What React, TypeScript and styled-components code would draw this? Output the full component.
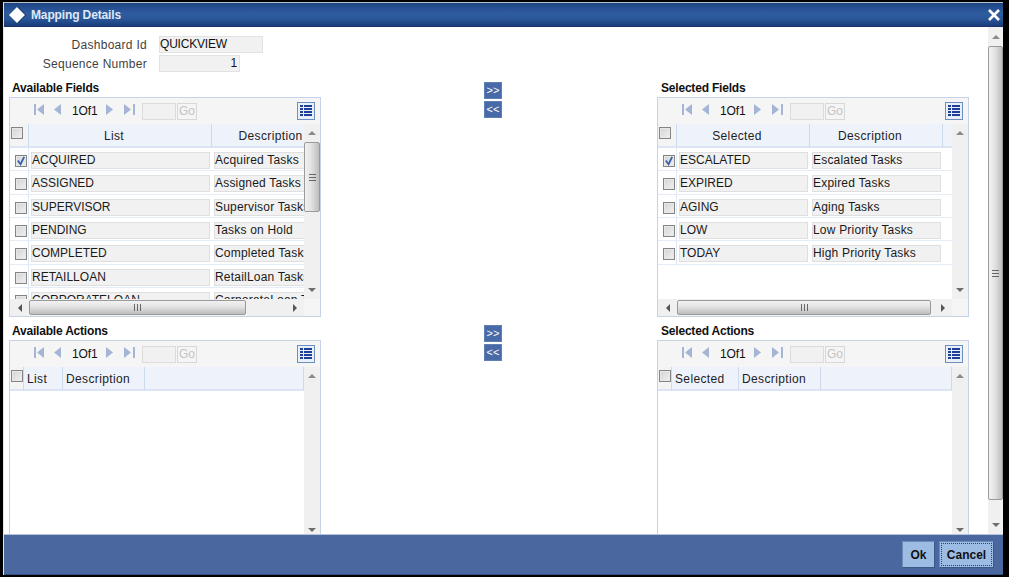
import React from "react";
import styled, { createGlobalStyle } from "styled-components";

const GlobalStyle = createGlobalStyle`
  html, body {
    margin: 0;
    padding: 0;
    background: #000;
    font-family: "Liberation Sans", Arial, sans-serif;
    font-size: 12px;
    overflow: hidden;
  }
`;

const Window = styled.div`
  width: 1009px;
  height: 577px;
  box-sizing: border-box;
  padding: 2px 6px 2px 3px;
  background: #000;
  display: flex;
  flex-direction: column;
`;

const Frame = styled.div`
  flex: 1;
  min-height: 0;
  display: flex;
  flex-direction: column;
  background: #fff;
  border-top: 1px solid #b9bec6;
  border-left: 1px solid #dfe6f2;
`;

const TitleBar = styled.div`
  height: 24px;
  box-sizing: border-box;
  flex: none;
  display: flex;
  align-items: center;
  padding: 0 2px 0 5px;
  gap: 4px;
  background: linear-gradient(#1d4484, #2e5c9f 45%, #2a5698 70%, #193c7a);
  border-bottom: 1px solid #17356d;
  color: #dfe8f6;
  font-weight: bold;
  letter-spacing: -0.13px;
`;

const TitleText = styled.span`
  flex: 1;
`;

const Middle = styled.div`
  flex: 1;
  min-height: 0;
  display: flex;
`;

const Content = styled.div`
  flex: 1;
  min-width: 0;
  overflow: hidden;
  padding: 8px 0 0 5px;
`;

const FieldRow = styled.div`
  display: flex;
  align-items: center;
  height: 19px;
  gap: 12px;
`;

const FieldLabel = styled.span`
  width: 138px;
  text-align: right;
  color: #3f3f3f;
  letter-spacing: 0.28px;
`;

const FieldValue = styled.div<{ $w: number; $right?: boolean }>`
  width: ${(p) => p.$w}px;
  height: 17px;
  box-sizing: border-box;
  background: #f1f1f1;
  border: 1px solid #e2e2e2;
  padding: 0 2px 0 0;
  line-height: 14px;
  color: #111;
  letter-spacing: -0.2px;
  text-align: ${(p) => (p.$right ? "right" : "left")};
`;

const Sections = styled.div`
  margin-top: 7px;
  display: grid;
  grid-template-columns: 312px 336px 312px;
  row-gap: 6px;
`;

const Group = styled.div``;

const GroupTitle = styled.div<{ $pad: number }>`
  height: 17px;
  line-height: 16px;
  padding-left: ${(p) => p.$pad}px;
  font-weight: bold;
  color: #111;
  letter-spacing: -0.2px;
`;

const MoveColumn = styled.div`
  padding: 2px 0 0 163px;
  display: flex;
  flex-direction: column;
  gap: 2px;
`;

const MoveButton = styled.div`
  width: 18px;
  height: 17px;
  box-sizing: border-box;
  background: #486aa6;
  border: 1px solid #5f7fb5;
  color: #fff;
  font-size: 11px;
  line-height: 14px;
  text-align: center;
`;

const Panel = styled.div<{ $h: number }>`
  height: ${(p) => p.$h}px;
  box-sizing: border-box;
  border: 1px solid #c6d3e6;
  display: flex;
  flex-direction: column;
  background: #fff;
`;

const Toolbar = styled.div`
  height: 26px;
  flex: none;
  display: flex;
  align-items: center;
  background: #f5f5f5;
  padding: 0 5px 0 24px;
`;

const PagerIcon = styled.svg<{ $ml: number }>`
  margin: 0 0 3px ${(p) => p.$ml}px;
  flex: none;
`;

const PageText = styled.span`
  margin-left: 10px;
  width: 24px;
  color: #111;
  font-size: 12px;
  letter-spacing: -0.1px;
`;

const PageInput = styled.div`
  margin-left: 7px;
  width: 34px;
  height: 17px;
  box-sizing: border-box;
  background: #f1f1f1;
  border: 1px solid #dcdcdc;
`;

const GoButton = styled.div`
  margin-left: 1px;
  width: 20px;
  height: 17px;
  box-sizing: border-box;
  border: 1px solid #d8d8d8;
  color: #c4c4c4;
  text-align: center;
  line-height: 15px;
`;

const ViewToggle = styled.svg`
  margin-left: auto;
`;

const PanelMain = styled.div`
  flex: 1;
  min-height: 0;
  display: flex;
`;

const TableArea = styled.div`
  flex: 1;
  min-width: 0;
  overflow: hidden;
`;

const TableGrid = styled.div<{ $cols: string; $w: number }>`
  width: ${(p) => p.$w}px;
  display: grid;
  grid-template-columns: ${(p) => p.$cols};
`;

const HeaderCell = styled.div<{ $left?: boolean }>`
  height: 24px;
  box-sizing: border-box;
  background: #eef2fb;
  border-right: 1px solid #cddaec;
  border-bottom: 2px solid #dbe5f3;
  line-height: 24px;
  color: #222;
  letter-spacing: 0.36px;
  text-align: ${(p) => (p.$left ? "left" : "center")};
  padding: ${(p) => (p.$left ? "0 0 0 3px" : "0 12px 0 0")};
  white-space: nowrap;
  overflow: hidden;
`;

const CheckHeader = styled(HeaderCell)`
  background: #f4f4f4;
  padding: 3px 0 0 1px;
`;

const BodyRow = styled.div`
  display: contents;
`;

const CheckCell = styled.div`
  height: 23.33px;
  box-sizing: border-box;
  padding: 7px 0 0 5px;
  border-right: 1px solid #dfe8f5;
  border-bottom: 1px solid #e4ecf7;
`;

const ValueCell = styled.div`
  height: 23.33px;
  box-sizing: border-box;
  padding: 4px 2px 0 2px;
  border-bottom: 1px solid #e4ecf7;
  overflow: hidden;
`;

const ValueBox = styled.div<{ $spacing: number }>`
  height: 17px;
  box-sizing: border-box;
  background: #f1f1f1;
  border: 1px solid #dfdfdf;
  line-height: 14px;
  color: #1a1a1a;
  letter-spacing: ${(p) => p.$spacing}px;
  white-space: nowrap;
`;

const Check = styled.span`
  display: block;
  width: 12px;
  height: 12px;
  box-sizing: border-box;
  border: 1px solid #858585;
  background: linear-gradient(135deg, #d4d4d4, #f0f0f0);
  box-shadow: inset 0 0 0 1px #e8e8e8;
  position: relative;
`;

const Tick = styled.svg`
  position: absolute;
  left: 0;
  top: 0;
`;

const VScroll = styled.div<{ $w: number }>`
  width: ${(p) => p.$w}px;
  flex: none;
  display: flex;
  flex-direction: column;
  align-items: center;
  background: #f0f0f0;
`;

const ArrowSlot = styled.div<{ $h: number }>`
  height: ${(p) => p.$h}px;
  flex: none;
  display: flex;
  align-items: center;
  justify-content: center;
`;

const Spacer = styled.div`
  flex: 1;
  min-height: 0;
`;

const ArrowUp = styled.span`
  border-left: 4px solid transparent;
  border-right: 4px solid transparent;
  border-bottom: 4px solid #8a8a8a;
`;

const ArrowDown = styled.span`
  border-left: 4px solid transparent;
  border-right: 4px solid transparent;
  border-top: 4px solid #6e6e6e;
`;

const ArrowLeft = styled.span`
  border-top: 4px solid transparent;
  border-bottom: 4px solid transparent;
  border-right: 4px solid #555;
`;

const ArrowRight = styled.span`
  border-top: 4px solid transparent;
  border-bottom: 4px solid transparent;
  border-left: 4px solid #555;
`;

const VThumb = styled.div<{ $h: number }>`
  width: 100%;
  height: ${(p) => p.$h}px;
  flex: none;
  box-sizing: border-box;
  border: 1px solid #9a9a9a;
  border-radius: 2px;
  background: linear-gradient(90deg, #f2f2f2, #e2e2e2 45%, #bdbdbd);
  display: flex;
  align-items: center;
  justify-content: center;
`;

const HRow = styled.div`
  height: 17px;
  flex: none;
  display: flex;
  align-items: center;
  background: #f0f0f0;
`;

const HThumb = styled.div<{ $w: number }>`
  width: ${(p) => p.$w}px;
  height: 15px;
  box-sizing: border-box;
  border: 1px solid #9a9a9a;
  border-radius: 2px;
  background: linear-gradient(#f2f2f2, #e2e2e2 45%, #bdbdbd);
  display: flex;
  align-items: center;
  justify-content: center;
`;

const HArrowSlot = styled.div`
  width: 19px;
  flex: none;
  display: flex;
  justify-content: center;
`;

const HGrow = styled.div`
  flex: 1;
  display: flex;
  align-items: center;
  height: 100%;
`;

const Grip = styled.div<{ $vertical?: boolean }>`
  width: 7px;
  height: 7px;
  background: ${(p) =>
    p.$vertical
      ? "repeating-linear-gradient(#666 0 1px, transparent 1px 3px)"
      : "repeating-linear-gradient(90deg, #666 0 1px, transparent 1px 3px)"};
`;

const Corner = styled.div`
  width: 16px;
  flex: none;
  align-self: stretch;
  background: #f5f5f5;
`;

const Footer = styled.div`
  height: 41px;
  flex: none;
  display: flex;
  align-items: flex-start;
  justify-content: flex-end;
  gap: 4px;
  padding: 6px 9px 0 0;
  box-sizing: border-box;
  background: #4a689f;
  border-top: 1px solid #b4c4de;
  border-bottom: 1px solid #334f86;
`;

const FooterButton = styled.div<{ $w: number; $focus?: boolean }>`
  width: ${(p) => p.$w}px;
  height: 27px;
  box-sizing: border-box;
  background: #9dbce4;
  border: 1px solid #3c5687;
  border-top-color: #6e8ab9;
  border-left-color: #6e8ab9;
  color: #111;
  font-weight: bold;
  text-align: center;
  line-height: 26px;
  outline: ${(p) => (p.$focus ? "1px dotted #5a3d10" : "none")};
  outline-offset: -3px;
`;

const PagerFirst = () => (
  <PagerIcon $ml={0} width="11" height="11" viewBox="0 0 11 11">
    <path d="M0 0h2v11H0zM10 0v11L3 5.5z" fill="#a5b5d6" />
  </PagerIcon>
);
const PagerPrev = () => (
  <PagerIcon $ml={9} width="8" height="11" viewBox="0 0 8 11">
    <path d="M7 0v11L0 5.5z" fill="#a5b5d6" />
  </PagerIcon>
);
const PagerNext = () => (
  <PagerIcon $ml={10} width="8" height="11" viewBox="0 0 8 11">
    <path d="M0 0v11l7-5.5z" fill="#a5b5d6" />
  </PagerIcon>
);
const PagerLast = () => (
  <PagerIcon $ml={10} width="11" height="11" viewBox="0 0 11 11">
    <path d="M9 0h2v11H9zM0 0v11l7-5.5z" fill="#a5b5d6" />
  </PagerIcon>
);

const ListIcon = () => (
  <ViewToggle width="18" height="18" viewBox="0 0 18 18">
    <rect x="0.5" y="0.5" width="17" height="17" fill="#eaf0fa" stroke="#6d8fbe" />
    <path
      d="M3 4h3M7 4h8M3 7h3M7 7h8M3 10h3M7 10h8M3 13h3M7 13h8"
      stroke="#1d3f9a"
      strokeWidth="2"
    />
  </ViewToggle>
);

const CheckBox = ({ checked }: { checked?: boolean }) => (
  <Check>
    {checked && (
      <Tick width="10" height="10" viewBox="0 0 11 11">
        <path d="M2 5l3 4 4-8" fill="none" stroke="#3a62a8" strokeWidth="2" />
      </Tick>
    )}
  </Check>
);

type Row = [string, string, boolean?];

type GridProps = {
  height: number;
  cols: string;
  tableWidth: number;
  heads: string[];
  leftHeads?: boolean;
  rows?: Row[];
  hThumb?: number;
};

const DataPanel = ({ height, cols, tableWidth, heads, leftHeads, rows, hThumb }: GridProps) => (
  <Panel $h={height}>
    <Toolbar>
      <PagerFirst />
      <PagerPrev />
      <PageText>1Of1</PageText>
      <PagerNext />
      <PagerLast />
      <PageInput />
      <GoButton>Go</GoButton>
      <ListIcon />
    </Toolbar>
    <PanelMain>
      <TableArea>
        <TableGrid $cols={cols} $w={tableWidth}>
          <CheckHeader>
            <CheckBox />
          </CheckHeader>
          {heads.map((h, i) => (
            <HeaderCell key={i} $left={leftHeads}>
              {h}
            </HeaderCell>
          ))}
          {leftHeads && <HeaderCell />}
          {rows?.map(([a, b, on]) => (
            <BodyRow key={a}>
              <CheckCell>
                <CheckBox checked={on} />
              </CheckCell>
              <ValueCell>
                <ValueBox $spacing={0}>{a}</ValueBox>
              </ValueCell>
              <ValueCell>
                <ValueBox $spacing={0.2}>{b}</ValueBox>
              </ValueCell>
              <ValueCell />
            </BodyRow>
          ))}
        </TableGrid>
      </TableArea>
      <VScroll $w={16}>
        <ArrowSlot $h={18}>
          <ArrowUp />
        </ArrowSlot>
        {rows && rows.length > 5 && (
          <VThumb $h={70}>
            <Grip $vertical />
          </VThumb>
        )}
        <Spacer />
        <ArrowSlot $h={18}>
          <ArrowDown />
        </ArrowSlot>
      </VScroll>
    </PanelMain>
    {hThumb && (
      <HRow>
        <HGrow>
          <HArrowSlot>
            <ArrowLeft />
          </HArrowSlot>
          <HThumb $w={hThumb}>
            <Grip />
          </HThumb>
          <Spacer />
          <HArrowSlot>
            <ArrowRight />
          </HArrowSlot>
        </HGrow>
        <Corner />
      </HRow>
    )}
  </Panel>
);

const availableFields: Row[] = [
  ["ACQUIRED", "Acquired Tasks", true],
  ["ASSIGNED", "Assigned Tasks"],
  ["SUPERVISOR", "Supervisor Tasks"],
  ["PENDING", "Tasks on Hold"],
  ["COMPLETED", "Completed Tasks"],
  ["RETAILLOAN", "RetailLoan Tasks"],
  ["CORPORATELOAN", "CorporateLoan Tasks"],
];

const selectedFields: Row[] = [
  ["ESCALATED", "Escalated Tasks", true],
  ["EXPIRED", "Expired Tasks"],
  ["AGING", "Aging Tasks"],
  ["LOW", "Low Priority Tasks"],
  ["TODAY", "High Priority Tasks"],
];

const MoveButtons = () => (
  <MoveColumn>
    <MoveButton>&gt;&gt;</MoveButton>
    <MoveButton>&lt;&lt;</MoveButton>
  </MoveColumn>
);

const App = () => (
  <Window>
    <GlobalStyle />
    <Frame>
      <TitleBar>
        <svg width="18" height="16" viewBox="0 0 18 16">
          <path d="M9 0l8 8-8 8-8-8z" fill="#12294f" />
          <path d="M8 0l8 8-8 8-8-8z" fill="#fff" />
        </svg>
        <TitleText>Mapping Details</TitleText>
        <svg width="14" height="14" viewBox="0 0 14 14">
          <path d="M2 2l10 10M12 2L2 12" stroke="#fff" strokeWidth="2.6" />
        </svg>
      </TitleBar>
      <Middle>
        <Content>
          <FieldRow>
            <FieldLabel>Dashboard Id</FieldLabel>
            <FieldValue $w={104}>QUICKVIEW</FieldValue>
          </FieldRow>
          <FieldRow>
            <FieldLabel>Sequence Number</FieldLabel>
            <FieldValue $w={81} $right>
              1
            </FieldValue>
          </FieldRow>
          <Sections>
            <Group>
              <GroupTitle $pad={3}>Available Fields</GroupTitle>
              <DataPanel
                height={220}
                cols="19px 183px 130px 0"
                tableWidth={332}
                heads={["List", "Description", ""]}
                rows={availableFields}
                hThumb={217}
              />
            </Group>
            <MoveButtons />
            <Group>
              <GroupTitle $pad={4}>Selected Fields</GroupTitle>
              <DataPanel
                height={220}
                cols="19px 133px 133px 9px"
                tableWidth={294}
                heads={["Selected", "Description", ""]}
                rows={selectedFields}
                hThumb={254}
              />
            </Group>
            <Group>
              <GroupTitle $pad={3}>Available Actions</GroupTitle>
              <DataPanel
                height={200}
                cols="14px 39px 82px 1fr"
                tableWidth={294}
                heads={["List", "Description"]}
                leftHeads
              />
            </Group>
            <MoveButtons />
            <Group>
              <GroupTitle $pad={4}>Selected Actions</GroupTitle>
              <DataPanel
                height={200}
                cols="14px 67px 82px 1fr"
                tableWidth={294}
                heads={["Selected", "Description"]}
                leftHeads
              />
            </Group>
          </Sections>
        </Content>
        <VScroll $w={15}>
          <ArrowSlot $h={19}>
            <ArrowUp />
          </ArrowSlot>
          <VThumb $h={454}>
            <Grip $vertical />
          </VThumb>
          <Spacer />
          <ArrowSlot $h={19}>
            <ArrowDown />
          </ArrowSlot>
        </VScroll>
      </Middle>
      <Footer>
        <FooterButton $w={33}>Ok</FooterButton>
        <FooterButton $w={55} $focus>
          Cancel
        </FooterButton>
      </Footer>
    </Frame>
  </Window>
);

export default App;
